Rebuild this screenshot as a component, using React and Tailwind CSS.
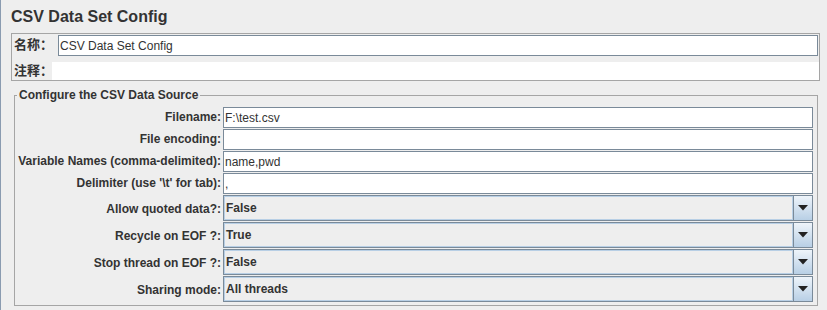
import { Fragment } from "react"

const FONT = { fontFamily: '"Liberation Sans", Arial, "Noto Sans CJK SC", sans-serif' }

const textRows = [
  { label: "Filename:", value: "F:\\test.csv" },
  { label: "File encoding:", value: "" },
  { label: "Variable Names (comma-delimited):", value: "name,pwd" },
  { label: "Delimiter (use '\\t' for tab):", value: "," },
]

const comboRows = [
  { label: "Allow quoted data?:", value: "False" },
  { label: "Recycle on EOF ?:", value: "True" },
  { label: "Stop thread on EOF ?:", value: "False" },
  { label: "Sharing mode:", value: "All threads" },
]

const ComboBox = ({ value }) => (
  <div className="flex h-[26px] border border-[#7a8a99] bg-[#eeeeee]">
    <div className="flex flex-1 items-center border border-[#b8cfe5] pl-[1px] text-[12px] font-bold text-[#333333]">
      {value}
    </div>
    <div className="flex w-[19px] items-center justify-center border-l border-[#7a8a99] bg-gradient-to-b from-[#eef4fa] to-[#b8cfe5]">
      <svg width="10" height="6" viewBox="0 0 10 6">
        <path d="M0 0h10L5 5.5z" fill="#222" />
      </svg>
    </div>
  </div>
)

const App = () => {
  return (
    <div className="h-[310px] w-[827px] overflow-hidden border-l border-[#8a9bb0] bg-[#eeeeee] text-[#333333]" style={FONT}>
      <h1 className="pl-[10px] pt-[7px] text-[16px] font-bold leading-[19px] text-[#333333]">CSV Data Set Config</h1>

      {/* name / comment box */}
      <div className="ml-[10px] mt-[7px] w-[809px] border border-[#a5a5a5]">
        <div className="flex h-[22px] items-start pt-[1px]">
          <span className="w-[45px] whitespace-nowrap pl-[2px] pt-[2px] text-[13px] font-bold leading-[16px]">名称：</span>
          <div className="ml-[1px] mr-[1px] flex h-[21px] flex-1 items-center border border-[#7a8a99] bg-white pl-[1px] text-[12px]">
            CSV Data Set Config
          </div>
        </div>
        <div className="mt-[6px] flex h-[18px] items-center">
          <span className="w-[40px] whitespace-nowrap pl-[2px] text-[13px] font-bold leading-[16px]">注释：</span>
          <div className="h-full flex-1 bg-white" />
        </div>
      </div>

      {/* csv source */}
      <fieldset className="ml-[13px] mt-[8px] w-[804px] border border-[#a5a5a5] pb-[2px] pr-[4px] pt-[5px]">
        <legend className="ml-[2px] px-[2px] text-[12px] font-bold leading-[13px]">Configure the CSV Data Source</legend>
        <div className="grid grid-cols-[206px_1fr] gap-x-[2px]">
          {textRows.map((row) => (
            <Fragment key={row.label}>
              <div className="flex h-[22px] items-start justify-end pt-[3px] text-[12px] font-bold leading-[15px]">{row.label}</div>
              <div className="flex h-[21px] items-center border border-[#7a8a99] bg-white pl-[1px] text-[12px]">{row.value}</div>
            </Fragment>
          ))}
          {comboRows.map((row) => (
            <Fragment key={row.label}>
              <div className="flex h-[27px] items-center justify-end text-[12px] font-bold">{row.label}</div>
              <div className="h-[27px] pb-[1px]">
                <ComboBox value={row.value} />
              </div>
            </Fragment>
          ))}
        </div>
      </fieldset>
    </div>
  )
}

export default App
